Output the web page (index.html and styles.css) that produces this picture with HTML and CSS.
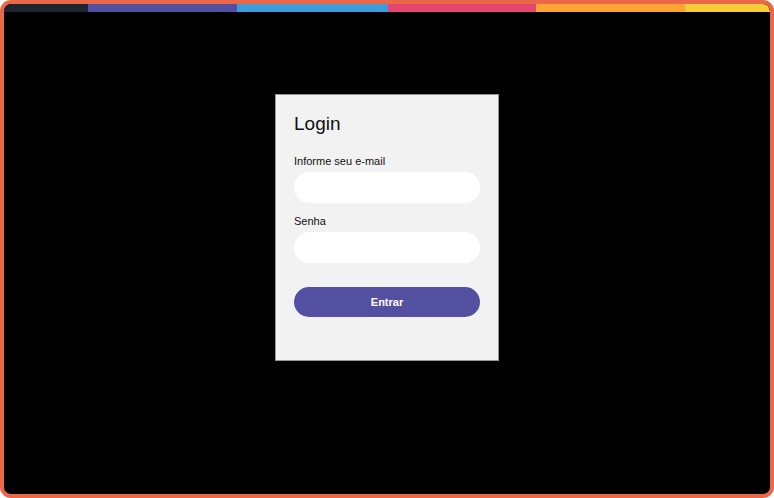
FILE: index.html
```html
<!DOCTYPE html>
<html lang="pt">
<head>
<meta charset="utf-8">
<title>Login</title>
<link rel="stylesheet" href="styles.css">
</head>
<body>
<div class="frame">
  <div class="strip">
    <span class="seg s1"></span>
    <span class="seg s2"></span>
    <span class="seg s3"></span>
    <span class="seg s4"></span>
    <span class="seg s5"></span>
    <span class="seg s6"></span>
  </div>
  <main class="stage">
    <form class="card">
      <h1 class="title">Login</h1>
      <label class="label">Informe seu e-mail</label>
      <input class="field" type="email">
      <label class="label">Senha</label>
      <input class="field" type="password">
      <button class="btn" type="button">Entrar</button>
    </form>
  </main>
</div>
</body>
</html>
```

FILE: styles.css
```css
html, body {
  margin: 0;
  padding: 0;
  background: #ffffff;
}
body {
  font-family: "Liberation Sans", Arial, sans-serif;
}
.frame {
  width: 774px;
  height: 498px;
  box-sizing: border-box;
  border: 4px solid #ea6848;
  border-radius: 11px;
  background: #000;
  overflow: hidden;
  display: flex;
  flex-direction: column;
}
.strip {
  display: flex;
  height: 8px;
  flex: none;
}
.seg { display: block; height: 100%; }
.s1 { width: 84px; background: #1e2530; border-top-left-radius: 7px; }
.s2 { width: 149px; background: #5450a1; }
.s3 { width: 151px; background: #3e9cd9; }
.s4 { width: 148px; background: #e34671; }
.s5 { width: 149px; background: #fca434; }
.s6 { flex: 1; background: #f6cc37; border-top-right-radius: 7px; }
.stage {
  flex: 1;
  display: flex;
  justify-content: center;
  align-items: flex-start;
  padding-top: 82px;
}
.card {
  width: 224px;
  height: 267px;
  box-sizing: border-box;
  background: #f2f2f2;
  border: 1px solid #959595;
  padding: 18px 18px 0 18px;
  display: flex;
  flex-direction: column;
}
.title {
  margin: 0 0 20px 0;
  font-size: 19px;
  font-weight: 400;
  line-height: 22px;
  color: #111;
}
.label {
  font-size: 11px;
  line-height: 13px;
  color: #111;
  margin-bottom: 4px;
}
.field {
  display: block;
  height: 31px;
  box-sizing: border-box;
  border: none;
  border-radius: 16px;
  background: #fff;
  margin: 0 0 12px 0;
  padding: 0 12px;
  outline: none;
}
.btn {
  margin-top: 12px;
  height: 30px;
  border: none;
  border-radius: 15px;
  background: #5450a1;
  color: #fff;
  font-family: "Liberation Sans", Arial, sans-serif;
  font-size: 11px;
  font-weight: 700;
}
```
